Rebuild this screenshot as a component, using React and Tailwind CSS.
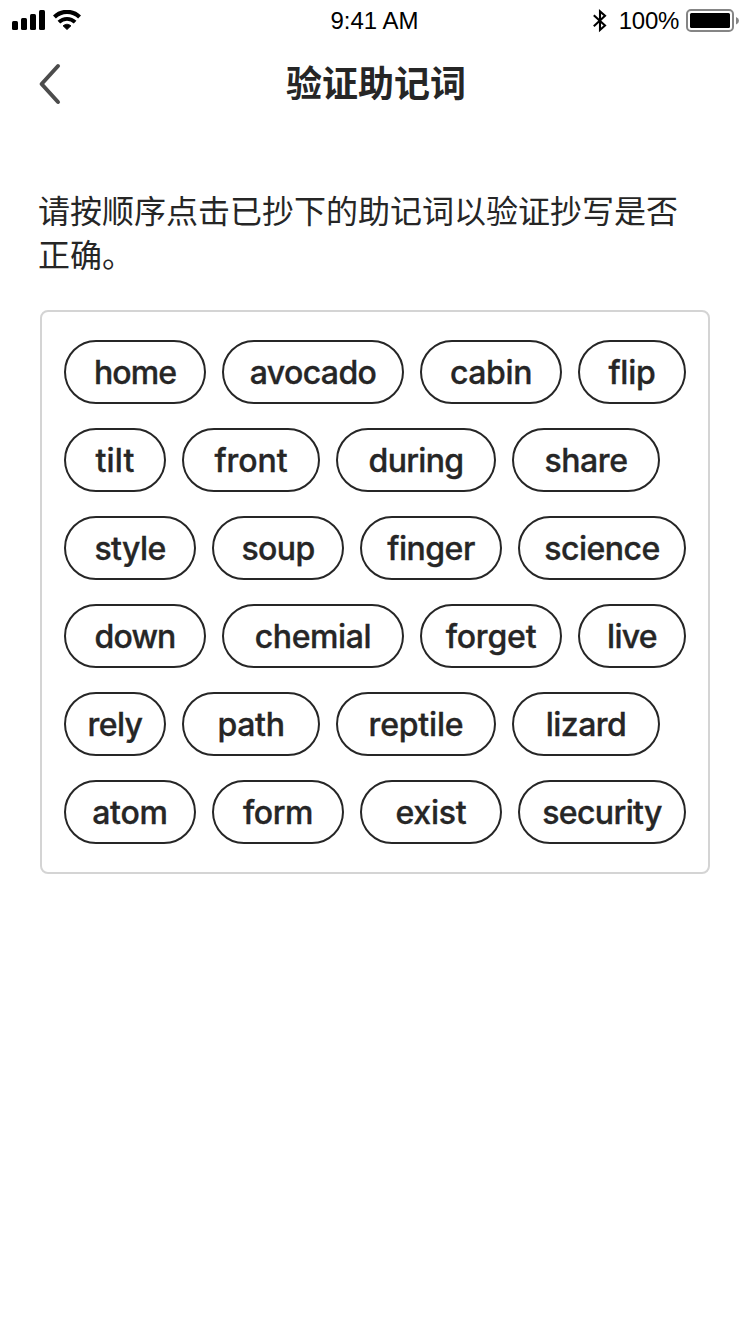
const rows = [
  [['home', 'w-[142px] tracking-[-0.9px]'], ['avocado', 'w-[182px] tracking-[-0.6px]'], ['cabin', 'w-[142px] tracking-[-0.4px]'], ['flip', 'w-[108px] tracking-[-0.2px]']],
  [['tilt', 'w-[102px] tracking-[0.2px]'], ['front', 'w-[138px] tracking-[-0.1px]'], ['during', 'w-[160px] tracking-[-0.7px]'], ['share', 'w-[148px] tracking-[-0.4px]']],
  [['style', 'w-[132px] tracking-[-0.6px]'], ['soup', 'w-[132px] tracking-[-0.6px]'], ['finger', 'w-[142px] tracking-[-0.5px]'], ['science', 'w-[168px] tracking-[-0.5px]']],
  [['down', 'w-[142px] tracking-[-0.9px]'], ['chemial', 'w-[182px] tracking-[-0.4px]'], ['forget', 'w-[142px] tracking-[-0.2px]'], ['live', 'w-[108px] tracking-[-0.7px]']],
  [['rely', 'w-[102px] tracking-[-0.6px]'], ['path', 'w-[138px] tracking-[-0.3px]'], ['reptile', 'w-[160px] tracking-[-0.2px]'], ['lizard', 'w-[148px] tracking-[-0.5px]']],
  [['atom', 'w-[132px] tracking-[-0.2px]'], ['form', 'w-[132px] tracking-[-0.4px]'], ['exist', 'w-[142px] tracking-[-0.2px]'], ['security', 'w-[168px] tracking-[-0.6px]']],
];

function SignalIcon() {
  return (
    <svg width="34" height="20" viewBox="0 0 34 20" aria-hidden="true">
      <rect x="0" y="11" width="6" height="9" rx="1.5" />
      <rect x="9" y="8" width="6" height="12" rx="1.5" />
      <rect x="18" y="4" width="6" height="16" rx="1.5" />
      <rect x="27" y="0" width="6" height="20" rx="1.5" />
    </svg>
  );
}

function WifiIcon() {
  return (
    <svg width="28" height="20" viewBox="0 0 28 20" fill="none" stroke="#000" aria-hidden="true">
      <path d="M1.4 7A18 18 0 0 1 26.6 7" strokeWidth="4.2" />
      <path d="M5.9 12.2A11.6 11.6 0 0 1 22.1 12.2" strokeWidth="3.8" />
      <path d="M14 19.6 L10 15.8 A6.4 6.4 0 0 1 18 15.8 Z" fill="#000" stroke="#000" strokeWidth="0.8" strokeLinejoin="round" />
    </svg>
  );
}

function BluetoothIcon() {
  return (
    <svg width="15" height="24" viewBox="0 0 15 24" fill="none" stroke="#000" strokeWidth="2.1" aria-hidden="true">
      <path d="M0.8 6.2 L12 16.6 L7 21 V2.4 L12 6.8 L0.8 17.2" />
    </svg>
  );
}

function BatteryIcon() {
  return (
    <svg width="54" height="24" viewBox="0 0 54 24" aria-hidden="true">
      <rect x="1" y="1" width="46" height="21" rx="4" fill="none" stroke="#858585" strokeWidth="2" />
      <rect x="4" y="4" width="40" height="15" rx="1.5" />
      <path d="M50 8 Q53 9.2 53 11.8 Q53 14.4 50 15.6 Z" fill="#858585" />
    </svg>
  );
}

export default function App() {
  return (
    <div className="flex h-[1334px] w-[750px] flex-col bg-white font-['Inter','Noto_Sans_CJK_SC',sans-serif] text-[#262626]">
      <div className="grid h-10 grid-cols-3 items-center font-['Liberation_Sans',sans-serif] text-[24px] leading-[38px] text-black">
        <div className="flex items-center gap-[7px] pl-3">
          <SignalIcon />
          <WifiIcon />
        </div>
        <div className="pr-px pt-0.5 text-center">9:41 AM</div>
        <div className="flex items-center justify-end pr-[10px] pt-0.5">
          <BluetoothIcon />
          <span className="ml-[11px] mr-[7px] tracking-[-0.3px]">100%</span>
          <BatteryIcon />
        </div>
      </div>

      <header className="grid h-[88px] grid-cols-[100px_1fr_100px] items-center">
        <button className="ml-[37px] flex w-6" aria-label="返回">
          <svg width="24" height="42" viewBox="0 0 24 42" fill="none" stroke="#4c4c4c" strokeWidth="4" strokeLinecap="round" strokeLinejoin="round">
            <path d="M21 3 L4.6 21 L21 39" />
          </svg>
        </button>
        <h1 className="pl-0.5 text-center text-[36px] font-bold leading-[50px]">验证助记词</h1>
      </header>

      <main className="px-10 pt-[62px]">
        <p className="-ml-0.5 w-[650px] text-[32px] leading-[44px]">请按顺序点击已抄下的助记词以验证抄写是否正确。</p>
        <div className="mt-8 flex h-[564px] flex-col gap-6 rounded-lg border-2 border-[#d4d4d4] px-[22px] py-7">
          {rows.map((row) => (
            <div key={row[0][0]} className="flex gap-4">
              {row.map(([word, style]) => (
                <button
                  key={word}
                  className={`${style} flex h-16 items-center justify-center rounded-full border-2 border-[#262626] pt-0.5 text-[32px] font-medium leading-none [-webkit-text-stroke:0.35px_#262626]`}
                >
                  {word}
                </button>
              ))}
            </div>
          ))}
        </div>
      </main>
    </div>
  );
}
